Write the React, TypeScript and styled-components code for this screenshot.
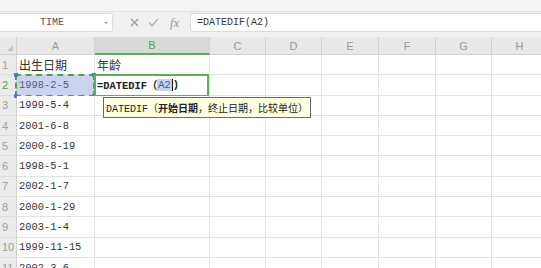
import styled, { createGlobalStyle } from 'styled-components';

const GlobalStyle = createGlobalStyle`
  html, body {
    margin: 0;
    padding: 0;
    background: #ffffff;
    overflow: hidden;
  }
`;

const COLS = [17, 78, 115, 56, 56, 57, 57, 56, 56];
const LETTERS = ['A', 'B', 'C', 'D', 'E', 'F', 'G', 'H'];
const ROW_H = 20.3;

const StyledApp = styled.div`
  width: 541px;
  height: 268px;
  overflow: hidden;
  background: #f2f2f2;
  font-family: "Liberation Sans", "Noto Sans CJK SC", sans-serif;
`;
const StyledTopStrip = styled.div`
  height: 12px;
  background: #f4f4f4;
  border-bottom: 1px solid #e2e2e2;
  box-sizing: border-box;
`;
const StyledFormulaBar = styled.div`
  display: flex;
  align-items: stretch;
  height: 19px;
  padding: 1px 0 5px;
  background: #f0f0f0;
`;
const StyledNameBox = styled.div`
  position: relative;
  width: 113px;
  box-sizing: border-box;
  background: #fff;
  border: 1px solid #dcdcdc;
  border-left: none;
  border-radius: 0 3px 3px 0;
  display: flex;
  align-items: center;
  justify-content: center;
  font-family: "Liberation Mono", monospace;
  font-size: 10px;
  color: #555;
  padding-right: 8px;
`;
const StyledCaret = styled.span`
  position: absolute;
  right: 4px;
  top: 8px;
  width: 0;
  height: 0;
  border-left: 2px solid transparent;
  border-right: 2px solid transparent;
  border-top: 2px solid #999;
`;
const StyledIcons = styled.div`
  width: 77px;
  display: flex;
  align-items: center;
  padding-left: 17px;
  gap: 9px;
  box-sizing: border-box;
  color: #9a9a9a;
`;
const StyledFx = styled.span`
  font-family: "Liberation Serif", serif;
  font-style: italic;
  font-size: 13px;
  color: #9a9a9a;
  margin-left: 2px;
`;
const StyledFormulaInput = styled.div`
  flex: 1;
  background: #fff;
  border: 1px solid #dcdcdc;
  border-right: none;
  border-radius: 3px 0 0 3px;
  display: flex;
  align-items: center;
  padding-left: 6px;
  font-family: "Liberation Mono", "Noto Sans CJK SC", monospace;
  font-size: 10px;
  color: #333;
`;
const StyledSheet = styled.div`
  display: grid;
  grid-template-columns: ${COLS.map((c) => `${c}px`).join(' ')};
  grid-template-rows: 18px repeat(11, ${ROW_H}px);
  background: #fff;
`;
const StyledColHead = styled.div<{ $active?: boolean }>`
  background: ${(p) => (p.$active ? '#d9d9d9' : '#e8e8e8')};
  border-right: 1px solid #d2d2d2;
  border-bottom: ${(p) => (p.$active ? '2px solid #5cae5c' : '1px solid #d2d2d2')};
  color: ${(p) => (p.$active ? '#4ea64e' : '#9a9a9a')};
  font-size: 11px;
  display: flex;
  align-items: center;
  justify-content: center;
  box-sizing: border-box;
`;
const StyledCorner = styled.div`
  position: relative;
  background: #e8e8e8;
  border-right: 1px solid #d2d2d2;
  border-bottom: 1px solid #d2d2d2;
  box-sizing: border-box;
  &::after {
    content: '';
    position: absolute;
    right: 3px;
    bottom: 3px;
    border-left: 6px solid transparent;
    border-bottom: 6px solid #c4c4c4;
  }
`;
const StyledRowHead = styled.div<{ $active?: boolean }>`
  background: #ebebeb;
  border-right: 1px solid #d2d2d2;
  border-bottom: 1px solid #dcdcdc;
  color: ${(p) => (p.$active ? '#4ea64e' : '#a0a0a0')};
  font-size: 11px;
  display: flex;
  align-items: center;
  padding-left: 2px;
  box-sizing: border-box;
`;
const StyledCell = styled.div<{ $cjk?: boolean; $copied?: boolean }>`
  position: relative;
  border-right: 1px solid #e2e2e2;
  border-bottom: 1px solid #e2e2e2;
  box-sizing: border-box;
  display: flex;
  align-items: center;
  padding-left: 2px;
  white-space: nowrap;
  background: ${(p) => (p.$copied ? '#c9d3ef' : '#fff')};
  color: ${(p) => (p.$copied ? '#56607a' : '#333')};
  font-family: ${(p) =>
    p.$cjk ? '"Noto Sans CJK SC", sans-serif' : '"Liberation Mono", monospace'};
  font-size: ${(p) => (p.$cjk ? '12px' : '10.4px')};
`;
const StyledMarchingAnts = styled.div`
  position: absolute;
  inset: -1px -1px -2px -2px;
  border: 2px dashed #4fa34f;
  pointer-events: none;
`;
const StyledHandle = styled.span<{ $pos: string }>`
  position: absolute;
  width: 4px;
  height: 4px;
  background: #4a7fd0;
  ${(p) => p.$pos}
`;
const StyledActiveBorder = styled.div`
  position: absolute;
  inset: -1px 0 -2px -1px;
  border: 2px solid #5cae5c;
  pointer-events: none;
`;
const StyledFormula = styled.span`
  font-family: "Liberation Mono", "Noto Sans CJK SC", monospace;
  font-weight: bold;
  font-size: 10.4px;
  color: #222;
  display: flex;
  align-items: center;
`;
const StyledRef = styled.span`
  background: #c9d3ef;
  color: #4a5a80;
  font-weight: normal;
  padding: 0 1px;
`;
const StyledCursor = styled.span`
  width: 1px;
  height: 12px;
  background: #111;
`;
const StyledTooltip = styled.div`
  position: absolute;
  left: 8px;
  top: calc(100% + 2px);
  z-index: 5;
  background: #ffffe1;
  border: 1px solid #6a6a6a;
  padding: 2px 2px 2px 2px;
  font-family: "Liberation Mono", "Noto Sans CJK SC", monospace;
  font-size: 10px;
  color: #222;
  white-space: nowrap;
  b {
    font-weight: bold;
  }
`;

const dates = [
  '1998-2-5',
  '1999-5-4',
  '2001-6-8',
  '2000-8-19',
  '1998-5-1',
  '2002-1-7',
  '2000-1-29',
  '2003-1-4',
  '1999-11-15',
  '2002-3-6',
];

const CrossIcon = () => (
  <svg width="9" height="9" viewBox="0 0 9 9">
    <path d="M1 1 L8 8 M8 1 L1 8" stroke="#9a9a9a" strokeWidth="1.1" fill="none" />
  </svg>
);
const CheckIcon = () => (
  <svg width="11" height="9" viewBox="0 0 11 9">
    <path d="M1 4.5 L4 7.8 L10 1" stroke="#9a9a9a" strokeWidth="1.1" fill="none" />
  </svg>
);

const App = () => {
  const rows: { a: string; b?: string; cjk?: boolean }[] = [
    { a: '出生日期', b: '年龄', cjk: true },
    ...dates.map((d) => ({ a: d })),
  ];

  return (
    <StyledApp>
      <GlobalStyle />
      <StyledTopStrip />
      <StyledFormulaBar>
        <StyledNameBox>
          TIME
          <StyledCaret />
        </StyledNameBox>
        <StyledIcons>
          <CrossIcon />
          <CheckIcon />
          <StyledFx>fx</StyledFx>
        </StyledIcons>
        <StyledFormulaInput>=DATEDIF(A2)</StyledFormulaInput>
      </StyledFormulaBar>
      <StyledSheet>
        <StyledCorner />
        {LETTERS.map((l) => (
          <StyledColHead key={l} $active={l === 'B'}>
            {l}
          </StyledColHead>
        ))}
        {rows.map((r, i) => {
          const n = i + 1;
          return [
            <StyledRowHead key={`h${n}`} $active={n === 2}>
              {n}
            </StyledRowHead>,
            <StyledCell key={`a${n}`} $cjk={r.cjk} $copied={n === 2}>
              {r.a}
              {n === 2 && (
                <StyledMarchingAnts>
                  <StyledHandle $pos="left:-3px;top:-3px;" />
                  <StyledHandle $pos="right:-3px;top:-3px;" />
                  <StyledHandle $pos="left:-3px;bottom:-3px;" />
                  <StyledHandle $pos="right:-3px;bottom:-3px;" />
                </StyledMarchingAnts>
              )}
            </StyledCell>,
            <StyledCell key={`b${n}`} $cjk={r.cjk}>
              {r.b}
              {n === 2 && (
                <>
                  <StyledFormula>
                    =DATEDIF（<StyledRef>A2</StyledRef>
                    <StyledCursor />)
                  </StyledFormula>
                  <StyledActiveBorder />
                  <StyledTooltip>
                    DATEDIF（<b>开始日期</b>，终止日期，比较单位）
                  </StyledTooltip>
                </>
              )}
            </StyledCell>,
            ...LETTERS.slice(2).map((l) => <StyledCell key={`${l}${n}`} />),
          ];
        })}
      </StyledSheet>
    </StyledApp>
  );
};

export default App;
